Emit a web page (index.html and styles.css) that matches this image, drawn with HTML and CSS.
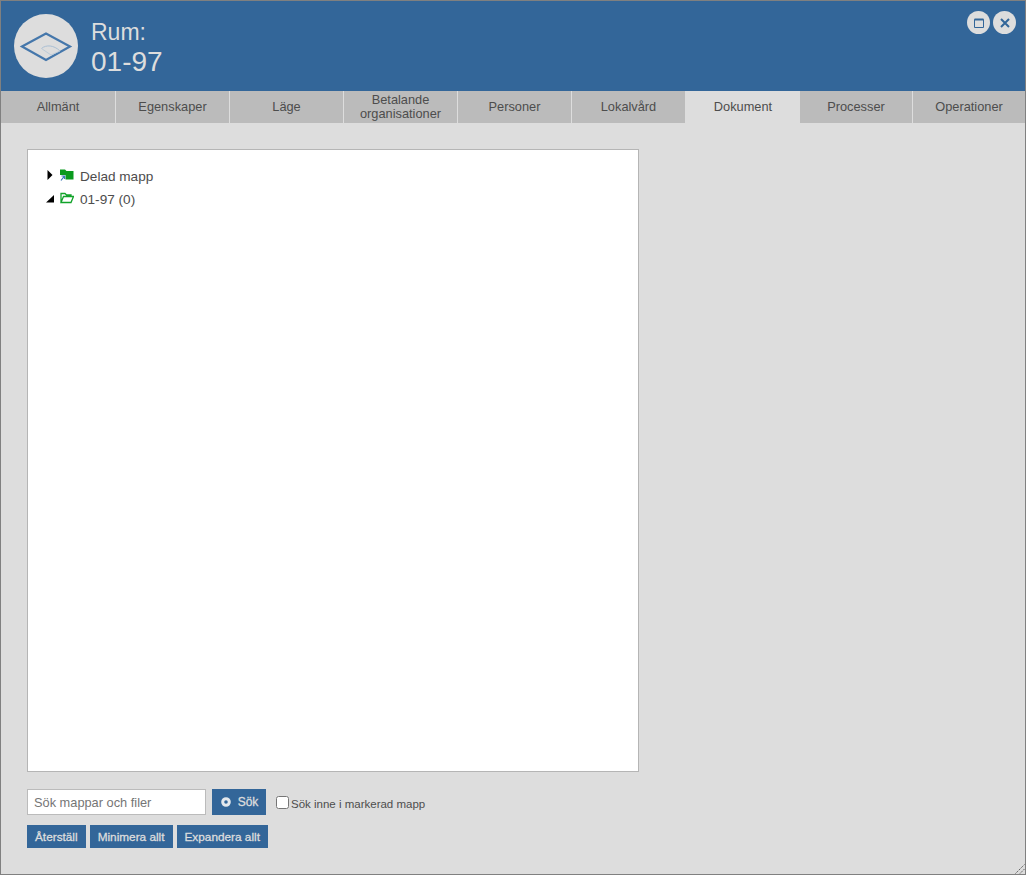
FILE: index.html
```html
<!DOCTYPE html>
<html lang="sv">
<head>
<meta charset="utf-8">
<title>Rum: 01-97</title>
<link rel="stylesheet" href="styles.css">
</head>
<body>
<div class="window">
  <header class="header">
    <div class="avatar">
      <svg width="64" height="64" viewBox="0 0 64 64">
        <path d="M8 32.500 L32 19.500 L56 32.500 L32 46 Z" fill="none" stroke="#4577ab" stroke-width="2.200"/>
        <path d="M27.500 34.500 C32 30.500 40 31 46 37" fill="none" stroke="#a9bfd4" stroke-width="1"/>
        <path d="M27.500 34.500 L37 41 L46 37" fill="none" stroke="#bccbd9" stroke-width="1"/>
      </svg>
    </div>
    <div class="titles">
      <div class="title-line">Rum:</div>
      <div class="title-line">01-97</div>
    </div>
    <div class="win-buttons">
      <button class="win-btn" aria-label="Maximera">
        <svg width="12" height="12" viewBox="0 0 12 12"><path d="M1.500 2.500 H10.500 V10.500 H1.500 Z" fill="none" stroke="#336699" stroke-width="1"/><path d="M1.500 2.500 H10.500" stroke="#336699" stroke-width="2"/></svg>
      </button>
      <button class="win-btn" aria-label="Stäng">
        <svg width="12" height="12" viewBox="0 0 12 12"><path d="M2 2 L10 10 M10 2 L2 10" stroke="#336699" stroke-width="2"/></svg>
      </button>
    </div>
  </header>
  <nav class="tabs">
    <div class="tab">Allmänt</div>
    <div class="tab">Egenskaper</div>
    <div class="tab">Läge</div>
    <div class="tab">Betalande organisationer</div>
    <div class="tab">Personer</div>
    <div class="tab">Lokalvård</div>
    <div class="tab active">Dokument</div>
    <div class="tab">Processer</div>
    <div class="tab last">Operationer</div>
  </nav>
  <main class="content">
    <div class="tree">
      <div class="node">
        <svg class="arrow" width="6" height="10" viewBox="0 0 6 10"><path d="M0.500 0 L5.500 5 L0.500 10 Z" fill="#000"/></svg>
        <svg class="folder" width="14" height="12" viewBox="0 0 14 12">
          <path d="M0 0.500 H5 L6.500 2 H13.500 V10.500 H0 Z" fill="#0a9a1e"/>
          <path d="M0 6 H5.500 V12 H0 Z" fill="#fff"/>
          <path d="M1 11.500 L4 7.500 M1.500 7 H4.500 V10" fill="none" stroke="#3a78b8" stroke-width="1.200"/>
        </svg>
        <span class="label">Delad mapp</span>
      </div>
      <div class="node">
        <svg class="arrow" width="8" height="8" viewBox="0 0 8 8"><path d="M8 0 V7.500 H0 Z" fill="#000"/></svg>
        <svg class="folder open" width="14" height="12" viewBox="0 0 14 12">
          <path d="M1 10.500 V1.500 H5 L6.500 3 H11 V4.500 M1 10.500 L3.500 4.500 H13.500 L11 10.500 Z" fill="#fff" stroke="#12a32a" stroke-width="1.300"/>
        </svg>
        <span class="label">01-97 (0)</span>
      </div>
    </div>
    <div class="search-row">
      <input class="search-input" type="text" placeholder="Sök mappar och filer">
      <button class="btn search-btn">
        <svg width="10" height="10" viewBox="0 0 10 10"><circle cx="5" cy="5" r="3.300" fill="none" stroke="#e4e8ec" stroke-width="3"/></svg>
        <span>Sök</span>
      </button>
      <label class="check-label"><input class="check" type="checkbox"><span>Sök inne i markerad mapp</span></label>
    </div>
    <div class="action-row">
      <button class="btn action">Återställ</button>
      <button class="btn action">Minimera allt</button>
      <button class="btn action">Expandera allt</button>
    </div>
    <svg class="grip" width="10" height="10" viewBox="0 0 10 10"><path d="M0.500 9.500 L9.500 0.500 M5 9.500 L9.500 5" stroke="#555" stroke-width="1" stroke-dasharray="1.400 1"/></svg>
  </main>
</div>
</body>
</html>
```

FILE: styles.css
```css
* { box-sizing: border-box; }
html, body { margin: 0; height: 100%; }
body { font-family: "Liberation Sans", Arial, sans-serif; background: #ddd; overflow: hidden; }
.window { position: relative; width: 1026px; height: 875px; border: 1px solid #808080; background: #ddd; display: flex; flex-direction: column; }
.header { height: 90px; background: #336699; display: flex; align-items: flex-start; padding: 13px 0 0 13px; position: relative; flex: none; }
.avatar { width: 64px; height: 64px; border-radius: 50%; background: #ddd; flex: none; }
.avatar svg { display: block; }
.titles { margin-left: 13px; color: #ddd; }
.title-line:first-child { font-size: 23px; line-height: 28px; margin-top: 4px; }
.title-line:last-child { font-size: 28px; line-height: 32px; }
.win-buttons { position: absolute; right: 9px; top: 10px; display: flex; gap: 3px; }
.win-btn { width: 23px; height: 23px; border: 0; border-radius: 50%; background: #ddd; padding: 0; display: flex; align-items: center; justify-content: center; }
.tabs { display: grid; grid-template-columns: 115px 114px 114px 114px 114px 114px 114px 113px 112px; height: 32px; flex: none; background: #bbb; }
.tab { min-width: 0; border-right: 1px solid #ddd; display: flex; align-items: center; justify-content: center; text-align: center; color: #4d4d4d; font-size: 12.800px; line-height: 14px; padding: 0 8px; }
.tab.active { background: #ddd; border-right: 0; box-shadow: -1px 0 0 #ddd; }
.tab.last { border-right: 0; }
.content { flex: 1; position: relative; padding: 26px 26px 0; display: flex; flex-direction: column; }
.tree { width: 612px; height: 623px; background: #fff; border: 1px solid #b5b5b5; padding: 15px 0 0 18px; flex: none; }
.node { display: flex; align-items: center; height: 23px; color: #4d4d4d; font-size: 13.600px; }
.arrow { flex: none; display: block; }
.node:first-child .arrow { margin: -3px 7px 0 1px; }
.node:last-child .arrow { margin: -2px 6px 0 0; }
.folder { flex: none; margin-top: -3px; }
.node:last-child .folder { margin-top: -4px; }
.label { margin-left: 6px; }
.search-row { display: flex; align-items: center; margin-top: 17px; height: 26px; }
.search-input { width: 179px; height: 26px; border: 1px solid #bbb; background: #fff; padding: 0 6px; font: 12.800px "Liberation Sans", Arial, sans-serif; color: #444; outline: 0; }
.search-input::placeholder { color: #757575; opacity: 1; }
.btn { border: 0; background: #336699; color: #ddd; font-family: "Liberation Sans", Arial, sans-serif; font-weight: 400; font-size: 11.800px; padding: 0; -webkit-text-stroke: 0.300px #ddd; }
.search-btn { margin-left: 6px; width: 54px; height: 26px; display: flex; align-items: center; justify-content: center; gap: 7px; padding-left: 1px; font-size: 12px; }
.check-label { display: flex; align-items: center; margin-left: 10px; font-size: 11.500px; color: #4d4d4d; }
.check-label span { margin-top: 4px; }
.check { margin: 1px 2px 0 0; width: 13px; height: 13px; }
.action-row { display: flex; gap: 4px; margin-top: 10px; }
.action { height: 23px; padding: 0 8px; }
.grip { position: absolute; right: 0; bottom: 0; }
```
